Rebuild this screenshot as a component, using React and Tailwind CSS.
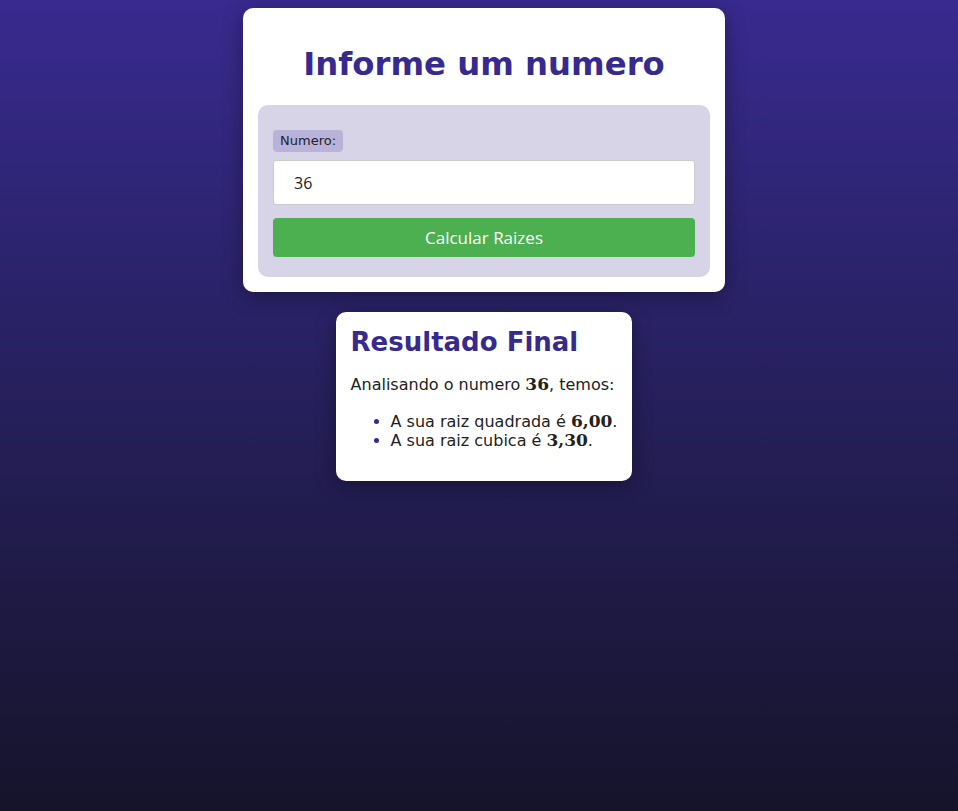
export default function App() {
  return (
    <div className="min-h-[811px] bg-gradient-to-b from-[#382a8f] to-[#16132b] pt-2 pl-[10px] font-['DejaVu_Sans',Verdana,sans-serif]">
      <div className="mx-auto w-[482px] rounded-[10px] bg-white px-[15px] pb-[15px] shadow-[0_4px_20px_rgba(0,0,0,0.35)]">
        <h1 className="flex h-[97px] items-center justify-center pt-[16px] text-[32.3px] font-bold text-[#372a8f]">Informe um numero</h1>
        <div className="rounded-[10px] bg-[#d8d4e8] px-[15px] pt-[23px] pb-[20px]">
          <div className="inline-block h-[22px] rounded-[4px] bg-[#b9b3da] px-[7px] pt-[3px] text-[13px] leading-[16px] text-[#222]">Numero:</div>
          <input
            defaultValue="36"
            className="mt-[8px] block h-[45px] w-full rounded-[3px] border border-[#ccc] bg-white pl-[20px] font-['Open_Sans',sans-serif] text-[16px] text-[#222] outline-none"
          />
          <button className="mt-[13px] block h-[39px] w-full rounded-[4px] bg-[#4caf50] font-['Open_Sans',sans-serif] text-[17px] text-white">Calcular Raizes</button>
        </div>
      </div>
      <div className="mx-auto mt-[20px] w-fit rounded-[10px] bg-white px-[15px] pt-[14px] pb-[31px] shadow-[0_4px_20px_rgba(0,0,0,0.35)]">
        <h2 className="text-[26px] leading-[32px] font-bold text-[#372a8f]">Resultado Final</h2>
        <p className="mt-[17px] text-[16px] leading-[19px] text-[#222]">
          Analisando o numero <strong className="font-['DejaVu_Serif',serif] text-[17px]">36</strong>, temos:
        </p>
        <ul className="mt-[18px] list-disc pl-[40px] text-[16px] leading-[19px] text-[#222] marker:text-[#372a8f]">
          <li>A sua raiz quadrada é <strong className="font-['DejaVu_Serif',serif] text-[17px]">6,00</strong>.</li>
          <li>A sua raiz cubica é <strong className="font-['DejaVu_Serif',serif] text-[17px]">3,30</strong>.</li>
        </ul>
      </div>
    </div>
  );
}
